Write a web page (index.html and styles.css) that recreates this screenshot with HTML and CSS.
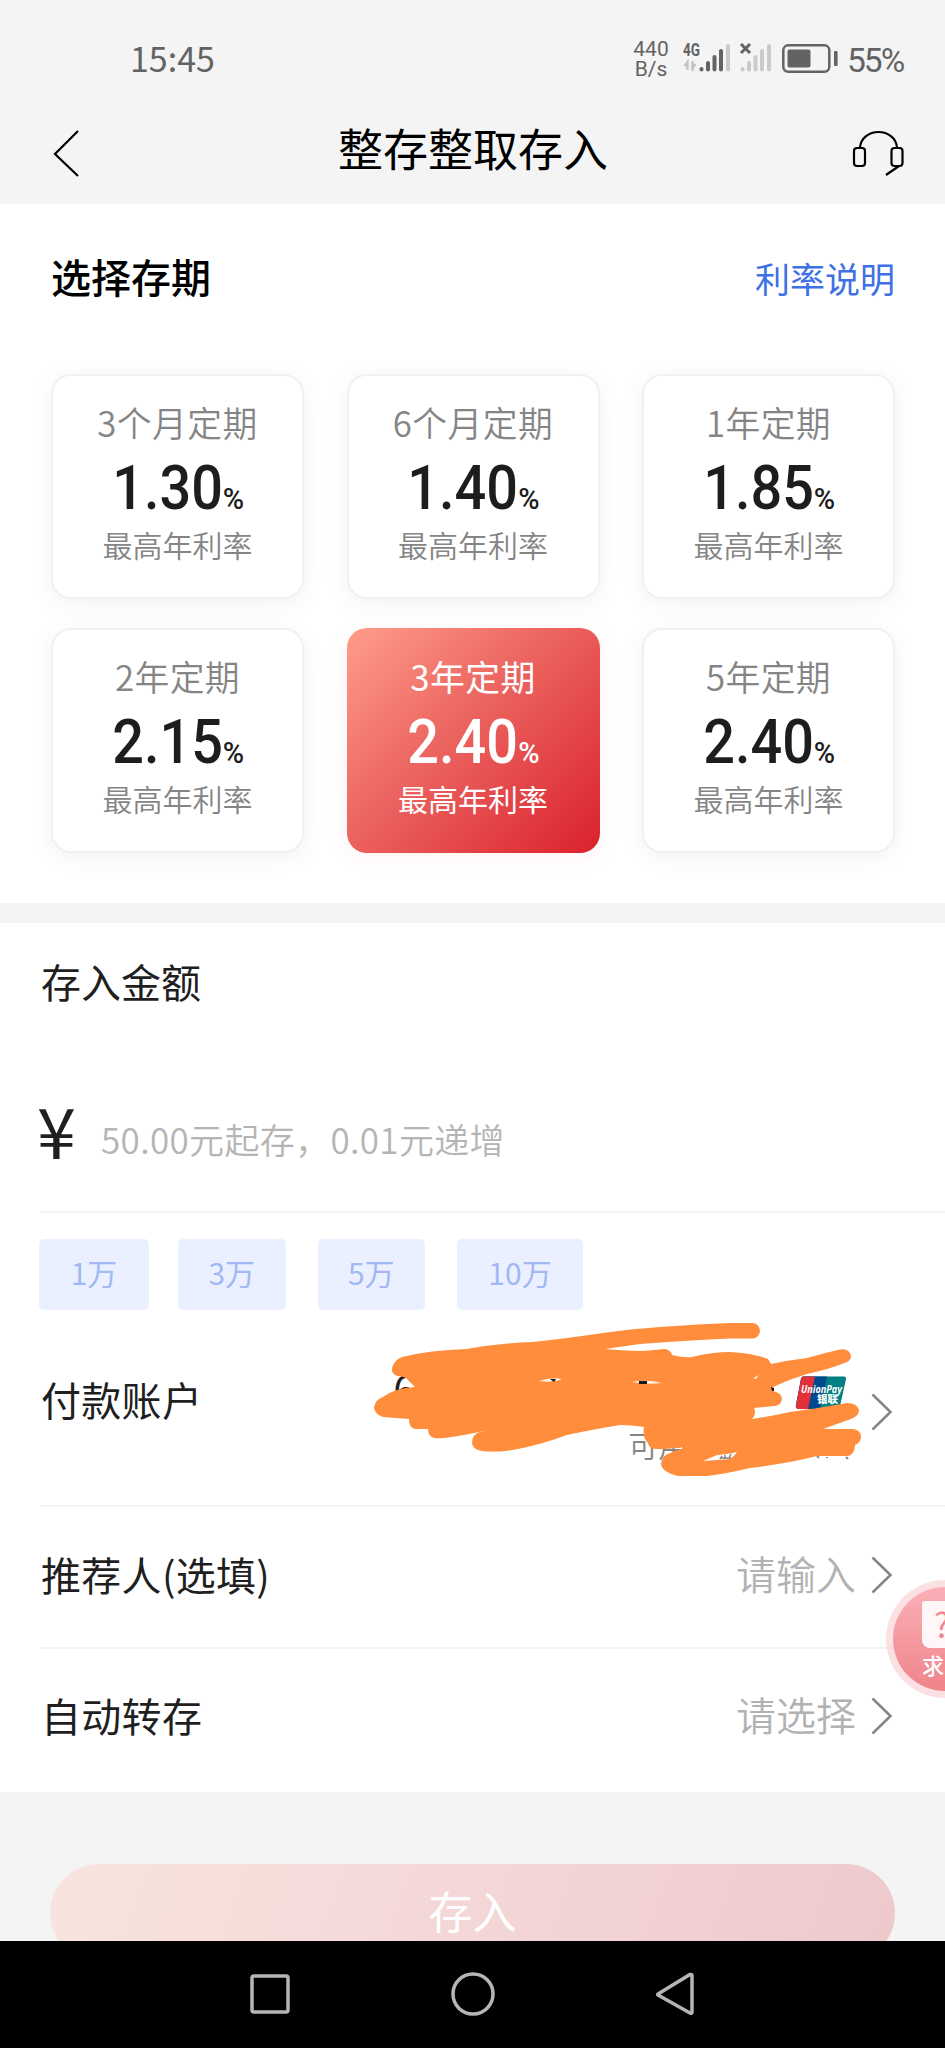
FILE: index.html
```html
<!DOCTYPE html>
<html lang="zh-CN">
<head>
<meta charset="utf-8">
<title>整存整取存入</title>
<link rel="stylesheet" href="styles.css">
</head>
<body>
<div class="screen">
  <header class="top">
    <div class="status">
      <span class="time">15:45</span>
      <span class="speed"><span>440</span><span>B/s</span></span>
      <svg class="signals" width="88" height="36" viewBox="0 0 88 36">
        <text class="net" x="0" y="16" textLength="17" lengthAdjust="spacingAndGlyphs">4G</text>
        <path d="M4.500 30V22l-3 4M9.500 21v10M9.500 28l3-4" fill="none" stroke="#c2c2c2" stroke-width="2.400"/>
        <g stroke-width="4" stroke-linecap="round" stroke="#636363">
          <path d="M18.500 29v.500M25 23v6.500M31.500 17v12.500M38 11v18.500"/>
          <path stroke="#cacaca" d="M45 6v23.500M59.500 29v.500M66 23v6.500M72.500 17v12.500M79 11v18.500M86 6v23.500"/>
        </g>
        <path d="M58 4l9 9M67 4l-9 9" stroke="#636363" stroke-width="3"/>
      </svg>
      <svg class="battery" width="56" height="30" viewBox="0 0 56 30">
        <rect x="1.300" y="1.300" width="46" height="26.500" rx="5" fill="none" stroke="#636363" stroke-width="2.500"/>
        <rect x="5.500" y="5.500" width="23" height="18" rx="2" fill="#636363"/>
        <rect x="52" y="7" width="3.600" height="15" rx="1" fill="#636363"/>
      </svg>
      <span class="percent">55%</span>
    </div>
    <div class="titlebar">
      <svg class="back" width="28" height="50" viewBox="0 0 28 50"><path d="M25 2L2 25l23 22" fill="none" stroke="#000" stroke-width="2.200"/></svg>
      <h1>整存整取存入</h1>
      <svg class="headset" width="52" height="48" viewBox="0 0 52 48" fill="none" stroke="#000" stroke-width="2.200">
        <path d="M8 17C9 8 17 2 26.500 2S44 8 45 17"/>
        <rect x="2" y="18" width="11" height="18" rx="3"/>
        <rect x="39.500" y="18" width="11" height="18" rx="3"/>
        <path d="M47 36L34 45"/>
      </svg>
    </div>
  </header>

  <section class="terms">
    <div class="terms-head"><h2>选择存期</h2><a class="link">利率说明</a></div>
    <div class="grid">
      <div class="card"><span class="name">3个月定期</span><span class="rate"><b>1.30</b><i>%</i></span><span class="note">最高年利率</span></div>
      <div class="card"><span class="name">6个月定期</span><span class="rate"><b>1.40</b><i>%</i></span><span class="note">最高年利率</span></div>
      <div class="card"><span class="name">1年定期</span><span class="rate"><b>1.85</b><i>%</i></span><span class="note">最高年利率</span></div>
      <div class="card"><span class="name">2年定期</span><span class="rate"><b>2.15</b><i>%</i></span><span class="note">最高年利率</span></div>
      <div class="card active"><span class="name">3年定期</span><span class="rate"><b>2.40</b><i>%</i></span><span class="note">最高年利率</span></div>
      <div class="card"><span class="name">5年定期</span><span class="rate"><b>2.40</b><i>%</i></span><span class="note">最高年利率</span></div>
    </div>
  </section>

  <section class="form">
    <h2 class="amount-title">存入金额</h2>
    <div class="amount"><span class="yen">¥</span><span class="hint">50.00元起存，0.01元递增</span></div>
    <div class="chips"><span class="chip first">1万</span><span class="chip">3万</span><span class="chip">5万</span><span class="chip wide">10万</span></div>
    <div class="row account">
      <span class="label">付款账户</span>
      <span class="details"><span class="number">6</span><span class="balance">可用</span></span>
      <svg class="chevron" width="22" height="38" viewBox="0 0 22 38"><path d="M1.500 1.500L19.500 19l-18 17.500"/></svg>
      <svg class="scribble" width="500" height="165" viewBox="370 1317 500 165">
        <g>
          <path d="M803 1376.500h41a2 2 0 0 1 2 2.500l-6 27a3 3 0 0 1-3 3h-38a3 3 0 0 1-3-4l5-26a3 3 0 0 1 2-2.500z" fill="#008084"/>
          <path d="M803 1376.500h24l-7 32.500h-21a3 3 0 0 1-3-4l5-26a3 3 0 0 1 2-2.500z" fill="#01498f"/>
          <path d="M803 1376.500h12l-7 32.500h-9a3 3 0 0 1-3-4l5-26a3 3 0 0 1 2-2.500z" fill="#e13038"/>
          <text class="up" x="801" y="1393" textLength="41" lengthAdjust="spacingAndGlyphs">UnionPay</text>
          <text class="up-cn" x="817" y="1403" textLength="21" lengthAdjust="spacingAndGlyphs">银联</text>
        </g>
        <path fill="#ff8d3b" d="M392 1368Q394 1360 402 1357Q430 1350 467 1349Q500 1343 533 1342Q570 1338 603 1333Q630 1329 660 1327Q700 1324 730 1323H753A7.800 7.800 0 0 1 753 1338.500H730Q690 1340 640 1344L605 1349Q625 1351 643 1351L665 1349Q671 1350 672 1355Q684 1358 692 1357Q712 1352 730 1352Q752 1353 768 1359L771 1364Q790 1360 807 1358Q824 1353 840 1349.500Q850 1348 851 1357Q850 1362 843 1363.500Q830 1369 807 1374Q790 1379 773 1387V1391Q782 1393 782 1399Q781 1405 775 1406L754 1408Q757 1414 752 1419Q772 1416 790 1412Q820 1408 847 1403Q857 1403 859 1410Q859 1416 851 1419L823 1429Q840 1429 853 1429Q861 1430 861 1437Q861 1442 855 1445Q855 1454 848 1456H817Q790 1463 750 1468Q725 1474 707 1476H678Q662 1472 661 1464Q662 1455 670 1453L686 1447Q670 1449 657 1449Q649 1449 648 1443Q642 1437 644 1427Q632 1425 620 1425Q590 1430 567 1435Q540 1445 513 1450Q499 1452 487 1451.500Q473 1451 472 1443Q472 1434 480 1432L488 1430Q466 1435 452 1437Q440 1439 434 1438Q428 1436 428 1429H415Q409 1428 409 1419L383 1417Q374 1414 374 1407Q376 1399 383 1397Q395 1388 415 1387L406 1378Q402 1376 397 1376Q391 1373 392 1368Z"/>
        <path d="M703 1461L717 1455Q730 1454 737 1452Q734 1457 730 1459Z" fill="#fff"/>
        <path d="M722 1456l-2 3m5-4v4m6-5l-2 4m-8 0h10" fill="none" stroke="#888" stroke-width="1.500"/>
        <path d="M539 1381q12-4 23-2-9 4-23 2zM632 1382q14-3 30 1-16 2-30-1zM753 1378l6-3-3 4z" fill="#fff1e4"/>
        <path d="M550 1379h6l-2 3zM639 1381h8v3h-8zM771 1387l3 1v3h-2z" fill="#181818"/>
        <path d="M817 1456l2 2m8-1v1m19-1l2 2" stroke="#888" stroke-width="2"/>
      </svg>
    </div>
    <div class="row"><span class="label">推荐人(选填)</span><span class="value">请输入</span><svg class="chevron" width="22" height="38" viewBox="0 0 22 38"><path d="M1.500 1.500L19.500 19l-18 17.500"/></svg></div>
    <div class="row last"><span class="label">自动转存</span><span class="value">请选择</span><svg class="chevron" width="22" height="38" viewBox="0 0 22 38"><path d="M1.500 1.500L19.500 19l-18 17.500"/></svg></div>
  </section>

  <div class="submit-area"><div class="submit">存入</div></div>

  <nav class="nav">
    <svg width="44" height="46" viewBox="0 0 44 46"><rect x="3" y="4" width="36" height="36" rx="2"/></svg>
    <svg width="44" height="46" viewBox="0 0 44 46"><circle cx="22" cy="22" r="20"/></svg>
    <svg width="44" height="46" viewBox="0 0 44 46"><path d="M5 22L37 2.500q2-.500 2 1V40q0 2-2 1L5 23q-1-.500 0-1z"/></svg>
  </nav>

  <div class="help">
    <div class="bubble">
      <span class="doc">?</span>
      <span class="help-text">求</span>
    </div>
  </div>
</div>
</body>
</html>
```

FILE: styles.css
```css
* { box-sizing: border-box; }
body { margin: 0; background: #f4f4f4; }
.screen {
  position: relative;
  width: 945px;
  height: 2048px;
  overflow: hidden;
  display: flex;
  flex-direction: column;
  font-family: "Noto Sans CJK SC", sans-serif;
  color: #1f1f1f;
}
h1, h2 { margin: 0; font-weight: 400; }

.top { height: 204px; background: #f4f4f4; flex: none; }
.status { display: flex; height: 100px; padding: 0 30px 0 130px; color: #636363; }
.time { font-size: 34px; line-height: 40px; margin-top: 38px; width: 503px; flex: none; }
.speed { display: flex; flex-direction: column; align-items: center; width: 36px; margin-top: 39px; margin-right: 14px; font: 21px/20px Roboto, sans-serif; flex: none; }
.signals { margin-top: 40px; margin-right: 11px; overflow: visible; flex: none; }
.net { font: 700 18px Roboto, sans-serif; fill: #636363; }
.battery { margin-top: 44px; margin-right: 9px; flex: none; }
.percent { font: 33.500px/40px Roboto, sans-serif; margin-top: 41px; letter-spacing: -2px; }
.titlebar { display: flex; align-items: center; justify-content: space-between; height: 104px; padding: 0 41px 0 53px; }
.back { margin-top: 3px; }
.titlebar h1 { font-size: 45px; line-height: 60px; color: #000; margin: -8px 0 0 13px; }
.headset { margin-top: 3px; }

.terms { height: 699px; background: #fff; padding: 42px 50px 0 51px; flex: none; }
.terms-head { display: flex; justify-content: space-between; height: 128px; line-height: 60px; }
.terms-head h2 { font-size: 40px; font-weight: 500; color: #000; }
.link { font-size: 35px; color: #3f70e6; line-height: 63px; }
.grid { display: grid; grid-template-columns: repeat(3, 253px); grid-auto-rows: 225px; column-gap: 42.500px; row-gap: 29px; }
.card { display: flex; flex-direction: column; align-items: center; border: 2px solid #f1f1f1; border-radius: 20px; background: #fff; box-shadow: 0 4px 24px rgba(0, 0, 0, .055); padding-top: 26px; }
.name { font-size: 34.800px; line-height: 40px; font-weight: 350; color: #858585; letter-spacing: .4px; }
.rate { display: flex; align-items: baseline; font-family: Roboto, sans-serif; font-weight: 500; line-height: 78px; height: 78px; color: #1d1d1d; margin-top: 7px; }
.rate b { font-size: 62px; font-weight: 500; transform: scaleX(.9); transform-origin: right; margin-left: -12px; }
.rate i { font-size: 29px; font-style: normal; letter-spacing: -1px; }
.note { font-size: 30px; line-height: 36px; font-weight: 350; color: #858585; margin-top: -1px; }
.active { border-color: transparent; background: linear-gradient(135deg, #ff9d8a 0%, #ed6964 40%, #da212c 100%) border-box; box-shadow: 0 4px 24px rgba(220, 40, 50, .06); }
.active .name, .active .rate, .active .note { color: #fff; font-weight: 400; }
.active .rate { font-weight: 500; }

.form { height: 869px; margin-top: 20px; background: #fff; padding-left: 40px; flex: none; }
.amount-title { font-size: 40px; line-height: 60px; height: 98px; padding: 28px 0 0 1px; }
.amount { display: flex; height: 192px; border-bottom: 2px solid #f3f3f3; }
.yen { width: 64px; margin-left: -3px; padding-top: 63px; font: 400 70px/90px "Noto Sans CJK SC", sans-serif; }
.hint { margin-top: 90px; font-size: 35px; line-height: 56px; font-weight: 350; color: #b5b5b5; letter-spacing: .35px; }
.chips { display: flex; gap: 32px; padding-top: 26px; height: 104px; margin-left: -1px; }
.chip { width: 107.500px; height: 71px; border-radius: 5px; background: #eaf0ff; color: #a2b8f4; font-size: 30px; line-height: 67px; text-align: center; }
.chip.first { width: 110px; margin-right: -3px; }
.chip.wide { width: 126px; }
.row { display: flex; align-items: center; height: 142px; border-bottom: 2px solid #f3f3f3; padding-right: 52px; }
.label { font-size: 40px; line-height: 60px; margin-top: -6px; padding-left: 1px; letter-spacing: .3px; }
.value { font-size: 40px; line-height: 60px; font-weight: 350; color: #b2b2b2; margin: -8px 15px 0 auto; }
.chevron { fill: none; stroke: #858585; stroke-width: 2.500; flex: none; margin-top: -4px; }
.last { border: 0; height: 138px; }
.submit-area { height: 149px; padding: 72px 50px 0; overflow: hidden; background: #f4f4f4; flex: none; }
.submit { height: 98px; border-radius: 49px; background: linear-gradient(110deg, #f8e4de, #f4d8d8 45%, #eec9cc); color: #fff; font-size: 44px; line-height: 92px; text-align: center; }
.nav { display: flex; flex: 1; background: #000; justify-content: center; gap: 158px; padding-top: 31px; }
.nav svg { fill: none; stroke: #b5b5b5; stroke-width: 3.500; }

/* account row: number and balance sit under the hand-drawn cover */
.account { position: relative; height: 190px; }
.account .label { margin-top: -25px; }
.account .chevron { margin-top: 2px; }
.details { display: flex; flex: 1; flex-direction: column; height: 190px; }
.number { font-size: 40px; line-height: 48px; margin: 48px 0 0 191px; }
.balance { font-size: 30px; line-height: 36px; font-weight: 350; color: #858585; margin: 14px 0 0 426px; }
.scribble { position: absolute; left: 330px; top: 0; }
.up { font: italic 700 11px "Open Sans", sans-serif; fill: #fff; }
.up-cn { font: 900 10px "Noto Sans CJK SC", sans-serif; fill: #fff; }

/* floating help button, half off the right edge */
.help { position: absolute; left: 886px; top: 1580px; width: 118px; height: 118px; border-radius: 50%; background: rgba(250, 205, 210, .6); padding: 7px; }
.bubble { display: flex; flex-direction: column; height: 104px; border-radius: 50%; background: linear-gradient(#fbb0b8, #f0838a); padding: 14px 0 0 29px; }
.doc { width: 46px; height: 47px; border-radius: 3px 3px 8px 8px; background: #fff7f7; color: #ee8990; font: 34px/46px "Noto Sans CJK SC", sans-serif; padding-left: 12px; }
.help-text { color: #fff; font-size: 22px; line-height: 32px; font-weight: 500; white-space: nowrap; }
```
